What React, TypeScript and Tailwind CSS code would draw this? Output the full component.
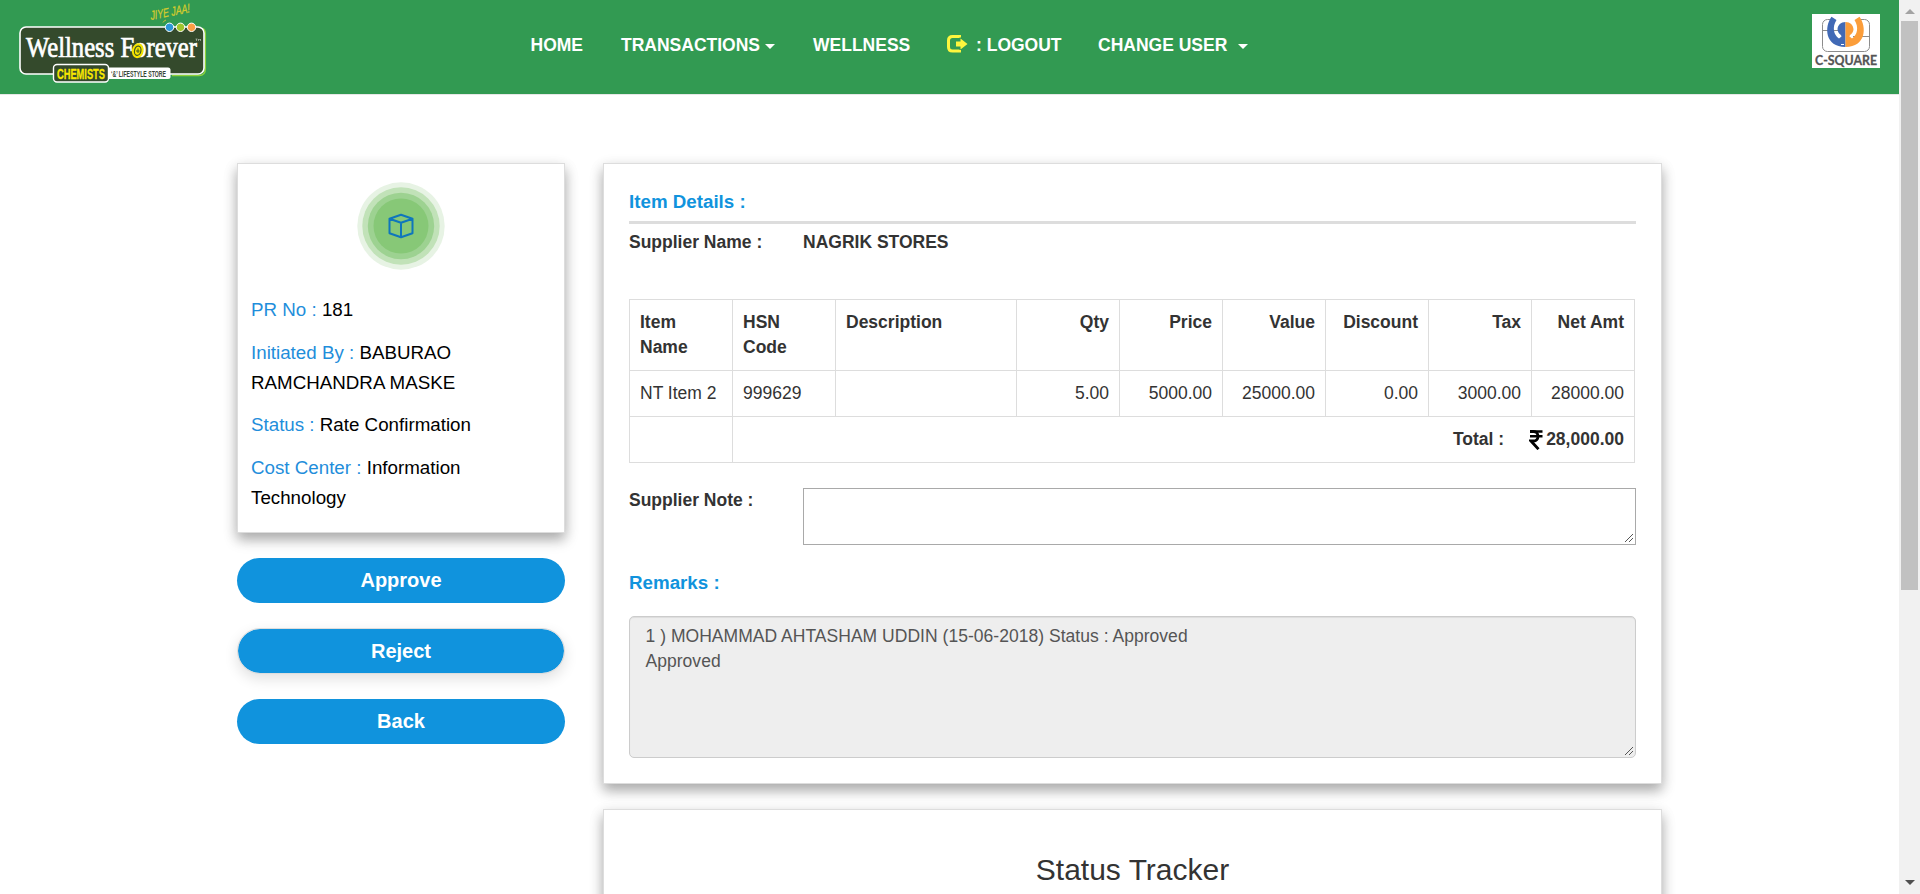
import React from "react";

const Caret = ({ className }: { className: string }) => (
  <span
    className={`inline-block h-0 w-0 border-x-[5px] border-t-[5px] border-x-transparent border-t-white ${className}`}
  />
);

const WellnessLogo = () => (
  <svg width="210" height="94" viewBox="0 0 210 94" className="block">
    <path d="M202 28.500Q205.300 29 205.300 34V69Q205.300 75.500 199 75.500H172" fill="none" stroke="#8ed13a" strokeWidth="1.500" />
    <rect x="20" y="27" width="184" height="47" rx="6" fill="#344a2c" stroke="#fff" strokeWidth="1.600" />
    <text x="26" y="57" fill="#fff" stroke="#fff" strokeWidth=".7" fontSize="29" textLength="171" lengthAdjust="spacingAndGlyphs" className="font-['Liberation_Serif',serif]">Wellness Forever</text>
    <ellipse cx="137.700" cy="50.700" rx="5.800" ry="7.500" fill="#f7e600" transform="rotate(12 137.700 50.700)" />
    <ellipse cx="137.700" cy="50.700" rx="3.200" ry="4.700" fill="none" stroke="#3e5a25" strokeWidth="1.200" transform="rotate(12 137.700 50.700)" />
    <path d="M136 51h3.600M138 48.500v4.500" stroke="#3e5a25" strokeWidth="1" />
    <path d="M195.500 39h2M196.500 39v2M198.500 41v-2l1 1l1-1v2" fill="none" stroke="#dfe5dc" strokeWidth=".5" />
    <circle cx="169.500" cy="27.300" r="4.200" fill="#2b97d8" stroke="#fff" strokeWidth="1" />
    <circle cx="180.500" cy="27.300" r="4.200" fill="#a0c52c" stroke="#fff" strokeWidth="1" />
    <circle cx="191.500" cy="27.300" r="4.200" fill="#fb9f45" stroke="#fff" strokeWidth="1" />
    <text transform="translate(151 20) rotate(-11) skewX(-4)" fill="#d3cb2e" stroke="#d3cb2e" strokeWidth=".3" fontSize="12.500" textLength="40" lengthAdjust="spacingAndGlyphs" className="font-['Liberation_Sans_Narrow','Liberation_Sans',sans-serif] italic">JIYE JAA!</text>
    <path d="M163 22.500q1-2 3-2.500" stroke="#c9bd3a" strokeWidth="1" fill="none" />
    <path d="M109 67.500H168Q170.500 67.500 170.500 70V76.500Q170.500 79 168 79H109Z" fill="#fff" />
    <rect x="53.500" y="64.500" width="55" height="17.500" rx="3.500" fill="#344a2c" stroke="#fff" strokeWidth="1.400" />
    <text x="57" y="78.800" fill="#f9e800" stroke="#f9e800" strokeWidth=".3" fontSize="15" textLength="48" lengthAdjust="spacingAndGlyphs" className="font-['Liberation_Sans_Narrow','Liberation_Sans',sans-serif] font-bold">CHEMISTS</text>
    <text x="111" y="76.500" fill="#3a4636" fontSize="8.500" textLength="55" lengthAdjust="spacingAndGlyphs" className="font-['Liberation_Sans_Narrow','Liberation_Sans',sans-serif] font-bold">‘&amp;’ LIFESTYLE STORE</text>
  </svg>
);

const CSquareLogo = () => (
  <svg width="68" height="54" viewBox="0 0 68 54" className="block bg-white">
    <rect x="10.500" y="5.500" width="47" height="32" rx="5" fill="none" stroke="#8c8c8c" strokeWidth="1" />
    <path d="M10.500 16.500H27M41 22.500H57.500" stroke="#8c8c8c" strokeWidth="1" />
    <path d="M20 4H48V15H20Z" fill="#fff" />
    <path d="M33.500 33C13 33 12 13 19.500 2.800L24.500 6C20 13 21.500 21 27 24.500L29.500 22.500C29.500 20.500 26 20 25.500 15.500C25.500 11 29 8 33.500 8Z" fill="#4169b5" />
    <path d="M33.500 33C54 33 55 13 47.500 2.800L42.500 6C47 13 45.500 21 40 24.500L37.500 22.500C37.500 20.500 41 20 41.500 15.500C41.500 11 38 8 33.500 8Z" fill="#fb9d3a" />
    <path d="M29 30.500h3" stroke="#fff" strokeWidth="1" />
    <text x="3" y="51" fill="#555" stroke="#555" strokeWidth=".3" fontSize="14" textLength="62" lengthAdjust="spacingAndGlyphs" className="font-['Lato',sans-serif] font-bold">C-SQUARE</text>
  </svg>
);

const LogoutIcon = () => (
  <svg width="21" height="18" viewBox="0 0 21 18" className="block">
    <path d="M12.500 2.500V1.500H5.500Q1.500 1.500 1.500 5.500V12Q1.500 16 5.500 16H12.500V15" fill="none" stroke="#fdf63e" strokeWidth="3" />
    <path d="M9 6.500H13.500V3.500L20.500 9L13.500 14.500V11.500H9Z" fill="#fdf63e" />
  </svg>
);

const BoxBadge = () => (
  <svg width="88" height="88" viewBox="0 0 88 88" className="block">
    <circle cx="44" cy="44" r="43.700" fill="#e7f3e4" />
    <circle cx="44" cy="44" r="38.700" fill="#c1e2b8" />
    <circle cx="44" cy="44" r="33.200" fill="#9dd291" />
    <circle cx="44" cy="44" r="27.500" fill="#87c877" />
    <path d="M44 32.800L55.500 36.700V51.300L44 55.200L32.500 51.300V36.700Z M32.500 36.700L44 40.800L55.500 36.700M44 40.800V55.200" fill="none" stroke="#0f76bc" strokeWidth="2" strokeLinejoin="round" />
  </svg>
);

const Rupee = () => (
  <svg width="14" height="20" viewBox="0 0 14 20" className="block">
    <path d="M1 1.500H13.500M1 6.300H13.500" stroke="#000" strokeWidth="2.500" />
    <path d="M1 1.500H4.500C10.500 1.500 10.500 11 4.500 11H2L9.500 19.200" fill="none" stroke="#000" strokeWidth="2.800" />
  </svg>
);

const Grip = () => (
  <svg width="9" height="9" viewBox="0 0 9 9" className="block" shapeRendering="crispEdges">
    <path d="M0.500 8.500L8.500 0.500M4.500 8.500L8.500 4.500" stroke="#555" strokeWidth="1" />
  </svg>
);

const Field = ({ label, value }: { label: string; value: string }) => (
  <p className="mb-[12.5px]">
    <span className="text-[#1f8edb]">{label} : </span>
    {value}
  </p>
);

const columns = ["Item Name", "HSN Code", "Description", "Qty", "Price", "Value", "Discount", "Tax", "Net Amt"];
const row = ["NT Item 2", "999629", "", "5.00", "5000.00", "25000.00", "0.00", "3000.00", "28000.00"];

const cardShadow = "border border-[#ddd] bg-white shadow-[0_7px_12px_rgba(0,0,0,0.26),0_4px_14px_rgba(0,0,0,0.12)]";

export default function App() {
  return (
    <div className="flex h-[894px] overflow-hidden bg-white font-['Liberation_Sans',Arial,sans-serif] text-[17.5px] leading-[25px] text-[#333]">
      <div className="flex w-[1899px] flex-col">
        <header className="flex h-[95px] shrink-0 items-start border-b border-[#e7e7e7] bg-[#329a52]">
          <div className="w-[530.5px]">
            <WellnessLogo />
          </div>
          <nav className="flex w-[1281.5px] pt-[33px] font-bold whitespace-nowrap text-white">
            <a className="w-[90.5px]">HOME</a>
            <a className="flex w-[192px] items-center">
              TRANSACTIONS
              <Caret className="mt-[2px] ml-[4.5px]" />
            </a>
            <a className="w-[134px]">WELLNESS</a>
            <a className="flex w-[151px]">
              <span className="mt-[2px] mr-[8px]">
                <LogoutIcon />
              </span>
              : LOGOUT
            </a>
            <a className="flex items-center">
              CHANGE USER
              <Caret className="mt-[2px] ml-[11px]" />
            </a>
          </nav>
          <div className="mt-[14px]">
            <CSquareLogo />
          </div>
        </header>

        <main className="flex gap-[38px] pt-[68px] pl-[237px]">
          <aside className="flex w-[328px] flex-col">
            <section className={`h-[370px] px-[13px] ${cardShadow}`}>
              <div className="flex justify-center pt-[18px]">
                <BoxBadge />
              </div>
              <div className="pt-[25px] text-[18.75px] leading-[30px] text-black">
                <Field label="PR No" value="181" />
                <Field label="Initiated By" value="BABURAO RAMCHANDRA MASKE" />
                <Field label="Status" value="Rate Confirmation" />
                <Field label="Cost Center" value="Information Technology" />
              </div>
            </section>
            <button className="mt-[25px] h-[45px] rounded-full bg-[#1093dd] text-[20px] font-bold text-white">
              Approve
            </button>
            <button className="mt-[25px] h-[46px] rounded-full border border-[#ddd] bg-[#1093dd] bg-clip-padding text-[20px] font-bold text-white shadow-[0_5px_14px_rgba(0,0,0,0.12)]">
              Reject
            </button>
            <button className="mt-[25px] h-[45px] rounded-full bg-[#1093dd] text-[20px] font-bold text-white">
              Back
            </button>
          </aside>

          <div className="flex w-[1059px] flex-col gap-[25px]">
            <section className={`h-[621px] px-[25px] ${cardShadow}`}>
              <h3 className="h-[60px] border-b-[3px] border-[#ddd] pt-[25px] text-[18.75px] font-bold text-[#1093dd]">
                Item Details :
              </h3>
              <div className="flex pt-[6px] font-bold">
                <span className="w-[174px]">Supplier Name :</span>
                <span>NAGRIK STORES</span>
              </div>
              <table className="mt-[44px] w-[1006px] table-fixed border-collapse">
                <colgroup>
                  <col className="w-[103px]" />
                  <col className="w-[103px]" />
                  <col className="w-[181px]" />
                  <col className="w-[103px]" />
                  <col className="w-[103px]" />
                  <col className="w-[103px]" />
                  <col className="w-[103px]" />
                  <col className="w-[103px]" />
                  <col className="w-[103px]" />
                </colgroup>
                <thead>
                  <tr className="h-[71px]">
                    {columns.map((c, i) => (
                      <th
                        key={c}
                        className={`border border-[#ddd] px-[10px] pt-[10px] align-top ${i > 2 ? "text-right" : "text-left"}`}
                      >
                        {c}
                      </th>
                    ))}
                  </tr>
                </thead>
                <tbody>
                  <tr className="h-[46px]">
                    {row.map((v, i) => (
                      <td
                        key={i}
                        className={`border border-[#ddd] px-[10px] pt-[10px] align-top ${i > 2 ? "text-right" : "text-left"}`}
                      >
                        {v}
                      </td>
                    ))}
                  </tr>
                  <tr className="h-[46px]">
                    <td className="border border-[#ddd]" />
                    <td colSpan={8} className="border border-[#ddd] px-[10px] pt-[10px] align-top font-bold">
                      <div className="flex justify-end">
                        <span className="mr-[25px]">Total :</span>
                        <span className="mt-[3px] mr-[3px]">
                          <Rupee />
                        </span>
                        <span>28,000.00</span>
                      </div>
                    </td>
                  </tr>
                </tbody>
              </table>
              <div className="flex pt-[25px]">
                <span className="w-[174px] font-bold">Supplier Note :</span>
                <div className="flex h-[57px] w-[833px] items-end justify-end border border-[#a9a9a9] pr-[2px] pb-px">
                  <Grip />
                </div>
              </div>
              <h3 className="pt-[25px] text-[18.75px] font-bold text-[#1093dd]">Remarks :</h3>
              <div className="mt-[21px] flex h-[142px] w-[1007px] justify-between rounded-[5px] border border-[#ccc] bg-[#eee] pt-[2px] pr-[2px] pb-px text-[#555] shadow-[inset_0_1px_1px_rgba(0,0,0,0.075)]">
                <p className="pt-[5px] pl-[15.500px] tracking-[0.03px]">
                  1 ) MOHAMMAD AHTASHAM UDDIN (15-06-2018) Status : Approved
                  <br />
                  Approved
                </p>
                <span className="self-end">
                  <Grip />
                </span>
              </div>
            </section>

            <section className={`h-[200px] pt-[40px] text-center ${cardShadow}`}>
              <h2 className="text-[30px] leading-[40px]">Status Tracker</h2>
            </section>
          </div>
        </main>
      </div>

      <div className="flex h-[894px] w-[21px] flex-col items-center bg-[#f1f1f1]">
        <div className="mt-[9px] h-0 w-0 border-x-[5px] border-b-[5px] border-x-transparent border-b-[#a3a3a3]" />
        <div className="mt-[7px] h-[569px] w-[17px] bg-[#c1c1c1]" />
        <div className="mt-auto mb-[9px] h-0 w-0 border-x-[5px] border-t-[5px] border-x-transparent border-t-[#505050]" />
      </div>
    </div>
  );
}
